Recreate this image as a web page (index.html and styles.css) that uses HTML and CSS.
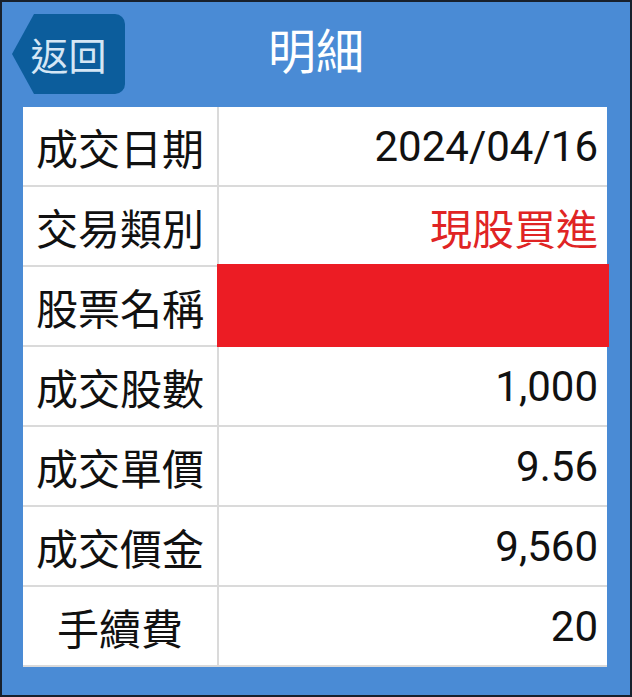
FILE: index.html
```html
<html>
<head>
    <meta charset="utf-8">
    <title>明細</title>
    <link rel="stylesheet" href="styles.css">
</head>
<body>
    <div class="screen">
        <div class="header">
            <div class="back">返回</div>
            <h1 class="title">明細</h1>
            <div></div>
        </div>
        <div class="detail">
            <div class="label">成交日期</div>
            <div class="value">2024/04/16</div>

            <div class="label">交易類別</div>
            <div class="value buy">現股買進</div>

            <div class="label">股票名稱</div>
            <div class="value masked"></div>

            <div class="label">成交股數</div>
            <div class="value">1,000</div>

            <div class="label">成交單價</div>
            <div class="value">9.56</div>

            <div class="label">成交價金</div>
            <div class="value">9,560</div>

            <div class="label">手續費</div>
            <div class="value">20</div>
        </div>
    </div>
</body>
</html>
```

FILE: styles.css
```css
body {
    margin: 0;
    background: #18202c;
    font-family: Roboto, "Noto Sans CJK TC", sans-serif;
}
.screen {
    margin: 2px;
    height: 693px;
    background: #4a8bd5;
}
.header {
    display: grid;
    grid-template-columns: 1fr auto 1fr;
    align-items: start;
    height: 105px;
    padding: 12px 0 0 10px;
    box-sizing: border-box;
}
.back {
    width: 113px;
    height: 80px;
    background: #0c5d9c;
    color: #d5e6f5;
    font-family: "Noto Sans CJK TC", sans-serif;
    font-size: 38px;
    line-height: 80px;
    text-align: center;
    border-radius: 0 10px 10px 0;
    clip-path: polygon(22px 0, 100% 0, 100% 100%, 22px 100%, 0 50%);
}
.title {
    margin: 0;
    padding-right: 10px;
    color: #fff;
    font-family: "Noto Sans CJK TC", sans-serif;
    font-size: 48px;
    font-weight: normal;
    line-height: 68px;
}
.detail {
    display: grid;
    grid-template-columns: 196px 1fr;
    margin: 0 23px 0 21px;
    background: #fff;
}
.label, .value {
    height: 80px;
    display: flex;
    align-items: center;
    border-bottom: 2px solid #dadada;
    box-sizing: border-box;
    font-size: 42px;
    color: #111;
}
.label {
    justify-content: center;
    border-right: 2px solid #dadada;
    font-family: "Noto Sans CJK TC", sans-serif;
}
.value {
    justify-content: flex-end;
    padding-right: 9px;
}
.buy {
    color: #e02424;
    font-family: "Noto Sans CJK TC", sans-serif;
}
.masked {
    background: #ec1c24;
    margin: -3px -2px 0 -2px;
    height: 83px;
    border-bottom: none;
}
```
